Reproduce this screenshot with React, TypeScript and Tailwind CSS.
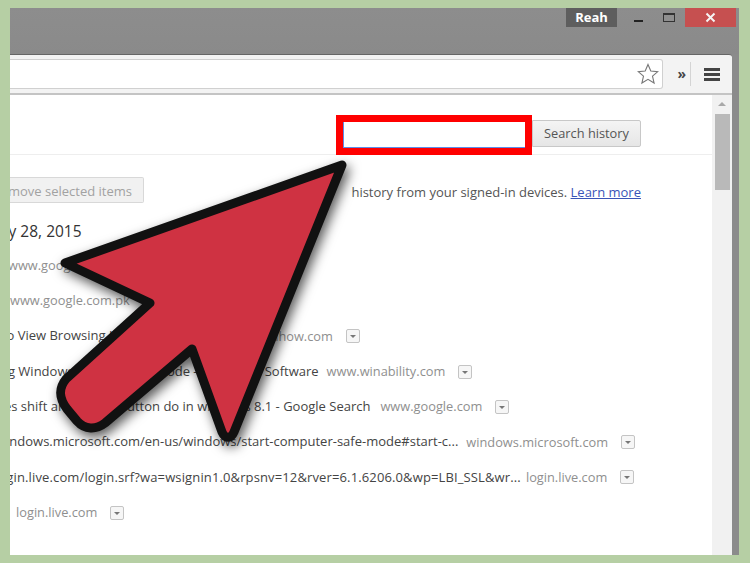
import React from "react";

const font = { fontFamily: '"Open Sans", "Noto Sans", sans-serif' };

function Caret() {
  return (
    <span className="ml-[13px] flex h-[14px] w-[14px] shrink-0 items-center justify-center rounded-[2px] border border-[#c4c4c4] bg-[#f6f6f6]">
      <span className="mt-[1px] h-0 w-0 border-x-[3px] border-t-[3px] border-x-transparent border-t-[#777]" />
    </span>
  );
}

function Row({ title, host, offset, titleClass = "mr-[8px]" }: { title?: string; host: string; offset: string; titleClass?: string }) {
  return (
    <div className={`flex h-[35.3px] items-center whitespace-nowrap text-[13px] ${offset}`}>
      {title && <span className={`text-[#444] ${titleClass}`}>{title}</span>}
      <span className="text-[12.8px] text-[#8f8f8f]">{host}</span>
      <Caret />
    </div>
  );
}

function Arrow() {
  return (
    <svg width="750" height="563" viewBox="0 0 750 563" className="pointer-events-none absolute left-0 top-0 drop-shadow-[3px_5px_6px_rgba(0,0,0,0.65)]">
      <path
        d="M342 165 L65 263 L150 303 L66 379 C58 389 59 398 67 409 L77 421 C85 430 96 430 105 423 L192 349 L222 432 C225 439 231 439 234 432 Z"
        fill="#cf3242"
        stroke="#111111"
        strokeWidth="9"
        strokeLinejoin="round"
      />
    </svg>
  );
}

export default function App() {
  return (
    <div className="relative h-[563px] w-[750px] overflow-hidden bg-[#b6cfa4] pb-[8px] pl-[10px] pr-[11px] pt-[8px]" style={font}>
      <div className="flex h-full flex-col bg-[#8b8b8b]">
        {/* title bar */}
        <div className="flex h-[46px] shrink-0 items-start justify-end bg-gradient-to-b from-[#8d8d8d] to-[#8a8a8a] pr-[3px]">
          <div className="flex h-[19px] w-[51px] items-center justify-center bg-[#5e5e5e] text-[13px] font-bold text-white">Reah</div>
          <div className="flex h-[19px] w-[68px] items-center justify-between pl-[17px] pr-[10px]">
            <span className="mt-[6px] h-[2px] w-[9px] bg-[#222]" />
            <span className="h-[9px] w-[12px] border border-[#333] border-t-[2px] bg-[#8f8f8f]" />
          </div>
          <div className="flex h-[19px] w-[51px] items-center justify-center bg-[#c65050]">
            <svg width="11" height="11" viewBox="0 0 11 11">
              <path d="M1.5 1.5 L9.5 9.5 M9.5 1.5 L1.5 9.5" stroke="#f5f5f5" strokeWidth="2" />
            </svg>
          </div>
        </div>

        <div className="flex min-h-0 flex-1 flex-col pr-[7px]">
          {/* toolbar */}
          <div className="flex h-[41px] shrink-0 items-center rounded-tr-[3px] border-t border-[#666] border-b-[2px] border-b-[#c4c4c4] bg-[#f3f3f3]">
            <div className="flex h-[30px] flex-1 items-center justify-end rounded-r-[3px] border border-l-0 border-[#d0d0d0] bg-white pr-[3px]">
              <svg width="22" height="22" viewBox="0 0 22 22">
                <path d="M11 1.5 L13.8 8 L20.8 8.6 L15.5 13.2 L17.1 20 L11 16.4 L4.9 20 L6.5 13.2 L1.2 8.6 L8.2 8 Z" fill="#fff" stroke="#777" strokeWidth="1.1" />
              </svg>
            </div>
            <div className="flex w-[23px] justify-end text-[14px] font-bold leading-none text-[#444]">»</div>
            <div className="ml-[4px] h-[24px] w-px bg-[#d4d4d4]" />
            <div className="flex w-[41px] flex-col items-center gap-[2px]">
              <span className="h-[3px] w-[16px] bg-[#444]" />
              <span className="h-[3px] w-[16px] bg-[#444]" />
              <span className="h-[3px] w-[16px] bg-[#444]" />
            </div>
          </div>

          {/* page */}
          <div className="flex min-h-0 flex-1 bg-white">
            <div className="min-w-0 flex-1 overflow-hidden">
              <div className="flex h-[60px] items-start justify-end border-b border-[#eeeeee] pr-[71px] pt-[20px]">
                <div className="h-[40px] w-[196px] border-[7px] border-[#ff0000] bg-white">
                  <div className="h-full border-b border-l border-[#5b8de8]" />
                </div>
                <div className="mt-[5px] flex h-[27px] w-[109px] items-center justify-center rounded-r-[2px] border border-[#c8c8c8] bg-gradient-to-b from-[#f4f4f4] to-[#e6e6e6] text-[12.8px] text-[#555]">Search history</div>
              </div>

              <div className="flex h-[48px] items-end justify-between pr-[71px]">
                <div className="flex h-[26px] w-[134px] items-center justify-end rounded-r-[2px] border border-l-0 border-[#d8d8d8] bg-[#f1f1f1] pr-[11px] pt-[3px] text-[13px] text-[#a2a2a2]">
                  <span className="whitespace-nowrap">move selected items</span>
                </div>
                <div className="mb-[1px] whitespace-nowrap text-[13px] text-[#555]">
                  history from your signed-in devices. <span className="text-[#3a54b8] underline">Learn more</span>
                </div>
              </div>

              <div className="-ml-[19px] flex h-[38px] items-end whitespace-nowrap text-[15.5px] leading-[20px] text-[#333]">July 28, 2015</div>

              <div className="pt-[7px]">
                <Row host="www.google.com" offset="-ml-[2px]" />
                <Row host="www.google.com.pk" offset="ml-0" />
                <Row title="How to View Browsing History - wikiHow" host="www.wikihow.com" offset="-ml-[39px]" />
                <Row title="Booting Windows 8.1 into Safe Mode - WinAbility Software" host="www.winability.com" offset="-ml-[42px]" />
                <Row title="What does shift and power button do in windows 8.1 - Google Search" host="www.google.com" offset="-ml-[57px]" titleClass="mr-[10px]" />
                <Row title="windows.microsoft.com/en-us/windows/start-computer-safe-mode#start-c..." host="windows.microsoft.com" offset="-ml-[14px]" />
                <Row title="login.live.com/login.srf?wa=wsignin1.0&rpsnv=12&rver=6.1.6206.0&wp=LBI_SSL&wr..." host="login.live.com" offset="-ml-[15px]" titleClass="mr-[5px] tracking-[0.13px]" />
                <Row host="login.live.com" offset="ml-[6px]" />
              </div>
            </div>

            {/* scrollbar */}
            <div className="flex w-[20px] shrink-0 flex-col items-center bg-[#f1f1f1]">
              <span className="mt-[7px] h-0 w-0 border-x-[4px] border-b-[4px] border-x-transparent border-b-[#a8a8a8]" />
              <span className="mt-[8px] h-[76px] w-[15px] bg-[#b9b9b9]" />
            </div>
          </div>
        </div>
      </div>
      <Arrow />
    </div>
  );
}
